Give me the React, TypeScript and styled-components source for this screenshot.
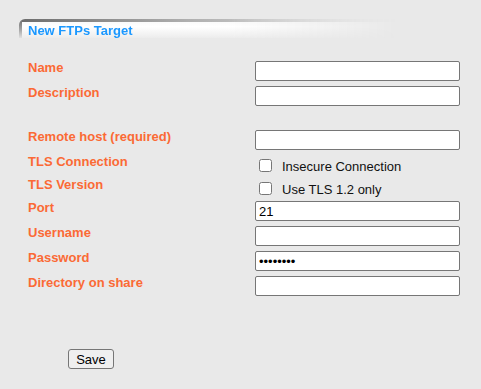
import styled, { createGlobalStyle } from 'styled-components';

const GlobalStyle = createGlobalStyle`
  html, body {
    margin: 0;
    padding: 0;
    background: #e9e9e9;
    font-family: 'Liberation Sans', Arial, sans-serif;
  }
`;

const Page = styled.div`
  width: 481px;
  height: 389px;
  padding: 19px 0 0 19px;
  box-sizing: border-box;
`;

//탭 모양 헤더
const TabHeader = styled.div`
  position: relative;
  width: 380px;
  height: 19px;
  box-sizing: border-box;
  padding: 2px 0 0 9px;
  border-top-left-radius: 6px;
  background: linear-gradient(180deg, #f7f7f7 0%, #ffffff 40%, #ececec 100%);
  -webkit-mask-image: linear-gradient(90deg, #000 55%, transparent 100%);
  &::before {
    content: '';
    position: absolute;
    left: 0;
    top: 0;
    right: 0;
    height: 3px;
    border-top-left-radius: 6px;
    background: linear-gradient(90deg, #6c6c6c 0%, #b0b0b0 45%, #e9e9e9 100%);
  }
  &::after {
    content: '';
    position: absolute;
    left: 0;
    top: 0;
    bottom: 0;
    width: 3px;
    border-top-left-radius: 6px;
    background: linear-gradient(180deg, #6c6c6c 0%, #aaa 60%, #e0e0e0 100%);
  }
`;

const Title = styled.span`
  font-size: 13px;
  font-weight: bold;
  color: #1b98ff;
  line-height: 15px;
`;

const Form = styled.div`
  display: grid;
  grid-template-columns: 227px 205px;
  padding: 23px 0 0 9px;
`;

const Label = styled.div<{ $h: number }>`
  height: ${({ $h }) => $h}px;
  font-size: 13px;
  font-weight: bold;
  color: #fb6a35;
  line-height: 13px;
`;

const Cell = styled.div<{ $h: number }>`
  height: ${({ $h }) => $h}px;
  display: flex;
  align-items: flex-start;
`;

const TextInput = styled.input`
  width: 205px;
  height: 20px;
  box-sizing: border-box;
  margin: 0;
  padding: 1px 3px;
  border: 1px solid #767676;
  border-radius: 2px;
  background: #fff;
  font-family: 'Liberation Sans', Arial, sans-serif;
  font-size: 13px;
  color: #000;
  outline: none;
`;

const CheckRow = styled.label`
  display: flex;
  align-items: flex-start;
  font-size: 13px;
  color: #111;
  margin-top: 3px;
  & > input {
    width: 13px;
    height: 13px;
    margin: 1px 10px 0 4px;
  }
  & > span {
    padding-top: 1px;
    line-height: 15px;
  }
`;

const Spacer = styled.div`
  grid-column: 1 / span 2;
  height: 19px;
`;

const Footer = styled.div`
  padding: 48px 0 0 49px;
`;

const SaveButton = styled.button`
  width: 46px;
  height: 20px;
  padding: 0;
  border: 1px solid #767676;
  border-radius: 3px;
  background: #efefef;
  font-family: 'Liberation Sans', Arial, sans-serif;
  font-size: 13px;
  color: #000;
`;

type Row =
  | { label: string; kind: 'text' | 'password'; value?: string; h: number }
  | { label: string; kind: 'check'; text: string; h: number };

const top: Row[] = [
  { label: 'Name', kind: 'text', h: 25 },
  { label: 'Description', kind: 'text', h: 25 },
];

const rest: Row[] = [
  { label: 'Remote host (required)', kind: 'text', h: 25 },
  { label: 'TLS Connection', kind: 'check', text: 'Insecure Connection', h: 23 },
  { label: 'TLS Version', kind: 'check', text: 'Use TLS 1.2 only', h: 23 },
  { label: 'Port', kind: 'text', value: '21', h: 25 },
  { label: 'Username', kind: 'text', h: 25 },
  { label: 'Password', kind: 'password', value: 'password', h: 25 },
  { label: 'Directory on share', kind: 'text', h: 25 },
];

const renderRow = (row: Row) => [
  <Label $h={row.h} key={row.label + '-l'}>
    {row.label}
  </Label>,
  <Cell $h={row.h} key={row.label + '-c'}>
    {row.kind === 'check' ? (
      <CheckRow>
        <input type='checkbox' />
        <span>{row.text}</span>
      </CheckRow>
    ) : (
      <TextInput type={row.kind} defaultValue={row.value ?? ''} />
    )}
  </Cell>,
];

const App = () => {
  return (
    <>
      <GlobalStyle />
      <Page>
        <TabHeader>
          <Title>New FTPs Target</Title>
        </TabHeader>
        <Form>
          {top.map(renderRow)}
          <Spacer />
          {rest.map(renderRow)}
        </Form>
        <Footer>
          <SaveButton>Save</SaveButton>
        </Footer>
      </Page>
    </>
  );
};

export default App;
